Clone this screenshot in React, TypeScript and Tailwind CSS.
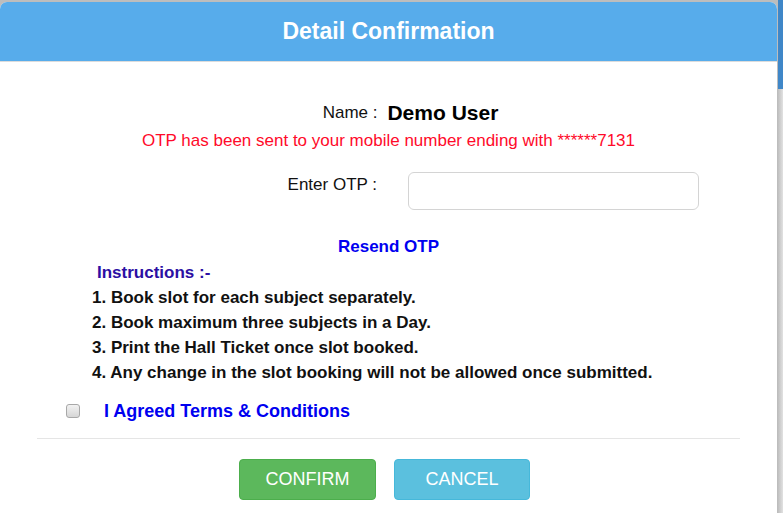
import React from "react";

export default function App() {
  const items = [
    "1. Book slot for each subject separately.",
    "2. Book maximum three subjects in a Day.",
    "3. Print the Hall Ticket once slot booked.",
    "4. Any change in the slot booking will not be allowed once submitted.",
  ];
  return (
    <div
      className="flex h-[513px] w-[783px] overflow-hidden bg-[#bdbdbd]"
      style={{ fontFamily: '"Liberation Sans", Arial, sans-serif' }}
    >
      <div className="w-[778px] pt-[2px]">
        <div className="h-[511px] w-[777px] overflow-hidden rounded-t-[7px] bg-white">
          <div className="flex h-[60px] items-center justify-center border-b border-[#dcdcdc] bg-[#57aceb]">
            <h1 className="text-[23px] font-bold leading-none text-white">Detail Confirmation</h1>
          </div>
          <div className="flex flex-col">
            <div className="mt-[39px] flex h-[24px] items-center justify-center pl-[44px]">
              <span className="text-[17px] text-[#111]">Name :</span>
              <span className="ml-[10px] text-[21px] font-bold text-black">Demo User</span>
            </div>
            <div className="mt-[6px] text-center text-[17px] leading-[20px] text-[#ff0a2a]">
              OTP has been sent to your mobile number ending with ******7131
            </div>
            <div className="mt-[21px] flex items-start">
              <div className="w-[377px] pt-[3px] text-right text-[17px] leading-[20px] text-[#111]">
                Enter OTP :
              </div>
              <input
                className="ml-[31px] h-[38px] w-[291px] rounded-[6px] border border-[#d4d4d4] bg-white px-3 outline-none"
                type="text"
              />
            </div>
            <div className="mt-[27px] text-center text-[17px] font-bold leading-[20px] text-[#0000f0]">
              Resend OTP
            </div>
            <div className="mt-[6px] pl-[97px] text-[17px] font-bold leading-[20px] text-[#2c0fa3]">
              Instructions :-
            </div>
            <div className="mt-[2px] pl-[92px]">
              {items.map((t) => (
                <div key={t} className="text-[17px] font-bold leading-[25px] text-[#111]">
                  {t}
                </div>
              ))}
            </div>
            <div className="mt-[14px] flex h-[24px] items-center pl-[66px]">
              <div className="h-[14px] w-[14px] rounded-[3px] border border-[#a8a8a8] bg-gradient-to-b from-[#f2f2f2] to-[#d6d6d6]" />
              <span className="ml-[24px] text-[18px] font-bold text-[#0000f0]">I Agreed Terms &amp; Conditions</span>
            </div>
            <div className="mx-[37px] mt-[15px] h-px bg-[#e5e5e5]" />
            <div className="mt-[20px] flex pl-[239px]">
              <button className="h-[41px] w-[137px] rounded-[4px] border border-[#4cae4c] bg-[#5cb85c] text-[18px] text-white">
                CONFIRM
              </button>
              <button className="ml-[18px] h-[41px] w-[136px] rounded-[4px] border border-[#46b8da] bg-[#5bc0de] text-[18px] text-white">
                CANCEL
              </button>
            </div>
          </div>
        </div>
      </div>
      <div className="flex flex-1 flex-col">
        <div className="h-[89px] bg-[#3f87c8]" />
        <div className="flex-1 bg-gradient-to-r from-[#bfbfbf] to-[#e2e2e2]" />
      </div>
    </div>
  );
}
